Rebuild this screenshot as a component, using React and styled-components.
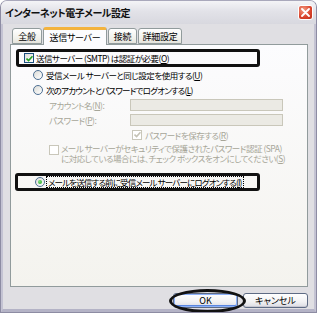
import React from 'react';
import styled, { createGlobalStyle } from 'styled-components';

const GlobalStyle = createGlobalStyle`
  * { box-sizing: border-box; }
  body {
    margin: 0;
    background: #ffffff;
    font-family: "Noto Sans CJK JP", "Noto Sans", sans-serif;
    font-feature-settings: "palt";
  }
`;

export default function App() {
  return (
    <>
      <GlobalStyle />
      <Window>
        <TitleBar>
          <Title>インターネット電子メール設定</Title>
          <CloseButton>
            <svg width="9" height="9" viewBox="0 0 9 9">
              <path d="M1 1 L8 8 M8 1 L1 8" stroke="#fff" strokeWidth="1.8" strokeLinecap="round" />
            </svg>
          </CloseButton>
        </TitleBar>
        <Body>
          <TabRow>
            <Tab w={30}>全般</Tab>
            <Tab w={64} active>送信サーバー</Tab>
            <Tab w={29}>接続</Tab>
            <Tab w={44}>詳細設定</Tab>
          </TabRow>
          <Panel>
            <MarkedRow>
              <CheckBox checked />
              <Label>送信サーバー (SMTP) は認証が必要(<u>O</u>)</Label>
            </MarkedRow>
            <RadioRow>
              <Radio />
              <Label>受信メール サーバーと同じ設定を使用する(<u>U</u>)</Label>
            </RadioRow>
            <RadioRow>
              <Radio />
              <Label tight>次のアカウントとパスワードでログオンする(<u>L</u>)</Label>
            </RadioRow>
            <FieldRow>
              <FieldLabel>アカウント名(<u>N</u>):</FieldLabel>
              <Input />
            </FieldRow>
            <FieldRow gapTop={2}>
              <FieldLabel>パスワード(<u>P</u>):</FieldLabel>
              <Input />
            </FieldRow>
            <SaveRow>
              <CheckBox checked disabled />
              <Label disabled>パスワードを保存する(<u>R</u>)</Label>
            </SaveRow>
            <SpaRow>
              <CheckBox disabled />
              <SpaText>
                <SpaLine>メール サーバーがセキュリティで保護されたパスワード認証 (SPA)</SpaLine>
                <SpaLine>に対応している場合には、チェック ボックスをオンにしてください(<u>S</u>)</SpaLine>
              </SpaText>
            </SpaRow>
            <MarkedRadioRow>
              <Radio checked />
              <FocusLabel>メールを送信する前に受信メール サーバーにログオンする(<u>I</u>)</FocusLabel>
            </MarkedRadioRow>
          </Panel>
          <ButtonRow>
            <Ring />
            <Button primary>OK</Button>
            <Button>キャンセル</Button>
          </ButtonRow>
        </Body>
      </Window>
    </>
  );
}

function CheckBox({ checked, disabled }) {
  return (
    <Box disabled={disabled}>
      {checked && (
        <svg width="7" height="7" viewBox="0 0 7 7">
          <path d="M0.5 3.5 L2.6 5.6 L6.5 1.2" fill="none" stroke={disabled ? '#c4c2b5' : '#21a121'} strokeWidth="1.6" />
        </svg>
      )}
    </Box>
  );
}

function Radio({ checked }) {
  return <RadioCircle>{checked && <Dot />}</RadioCircle>;
}

const Window = styled.div`
  position: relative;
  width: 317px;
  height: 313px;
  display: flex;
  flex-direction: column;
  background: #e0dfe3;
  border: 1px solid #8d8ca3;
  border-top-color: #a9a8bb;
  border-radius: 7px 7px 0 0;
  overflow: hidden;
`;

const TitleBar = styled.div`
  height: 23px;
  flex: none;
  display: flex;
  align-items: center;
  justify-content: space-between;
  padding: 0 3px 0 4px;
  background: linear-gradient(#f4f4f7, #e2e2e8 45%, #d8d8df);
`;

const Title = styled.div`
  font-size: 10px;
  font-weight: 700;
  color: #111;
  letter-spacing: -0.5px;
`;

const CloseButton = styled.div`
  width: 15px;
  height: 15px;
  border-radius: 3px;
  border: 1px solid #fff;
  background: radial-gradient(circle at 35% 30%, #f29b82, #d9412a 60%, #b8301c);
  display: flex;
  align-items: center;
  justify-content: center;
`;

const Body = styled.div`
  flex: 1;
  display: flex;
  flex-direction: column;
  padding: 2px 6px 0 7px;
  border-left: 2px solid #c4c3d3;
  border-right: 2px solid #c4c3d3;
  border-bottom: 3px solid #b4b3c6;
`;

const TabRow = styled.div`
  height: 18px;
  display: flex;
  align-items: flex-end;
  padding-left: 2px;
  position: relative;
  z-index: 1;
`;

const Tab = styled.div`
  width: ${p => p.w}px;
  height: ${p => (p.active ? 18 : 16)}px;
  margin-right: 1px;
  margin-bottom: ${p => (p.active ? -1 : 0)}px;
  display: flex;
  align-items: center;
  justify-content: center;
  font-size: 9px;
  letter-spacing: -0.3px;
  color: #000;
  border: 1px solid #919b9c;
  border-bottom: ${p => (p.active ? 'none' : '1px solid #919b9c')};
  border-top: ${p => (p.active ? '3px solid #f3b33d' : '1px solid #919b9c')};
  border-radius: 3px 3px 0 0;
  background: ${p => (p.active ? '#fcfcfe' : 'linear-gradient(#ffffff, #f0f0ea 70%, #e4e3dc)')};
`;

const Panel = styled.div`
  height: 243px;
  display: flex;
  flex-direction: column;
  align-items: flex-start;
  padding: 4px 0 0 5px;
  border: 1px solid #919b9c;
  background: linear-gradient(#fcfcfe, #f4f3ee);
  font-size: 8.5px;
  letter-spacing: -0.5px;
  color: #000;
`;

const Label = styled.span`
  white-space: nowrap;
  letter-spacing: ${p => (p.tight ? '-0.8px' : '-0.5px')};
  color: ${p => (p.disabled ? '#a7a698' : '#000')};
`;

const MarkedRow = styled.div`
  width: 244px;
  height: 18px;
  flex: none;
  display: flex;
  align-items: center;
  gap: 2px;
  padding-left: 5px;
  border: 3px solid #111;
  border-radius: 3px;
`;

const RadioRow = styled.div`
  height: 15px;
  flex: none;
  display: flex;
  align-items: center;
  gap: 3px;
  padding-left: 17px;
  & + & { height: 16px; }
`;

const FieldRow = styled.div`
  height: 13px;
  flex: none;
  margin-top: ${p => p.gapTop || 0}px;
  display: flex;
  align-items: center;
  padding-left: 33px;
  color: #a7a698;
`;

const FieldLabel = styled.span`
  width: 81px;
  white-space: nowrap;
`;

const Input = styled.div`
  width: 153px;
  height: 12px;
  border: 1px solid #c9c7ba;
  background: #ebeae4;
`;

const SaveRow = styled.div`
  height: 15px;
  flex: none;
  margin-top: 1px;
  display: flex;
  align-items: center;
  gap: 3px;
  padding-left: 116px;
`;

const SpaRow = styled.div`
  height: 19px;
  flex: none;
  margin-top: 3px;
  display: flex;
  align-items: flex-start;
  gap: 2px;
  padding-left: 33px;
`;

const SpaText = styled.div`
  display: flex;
  flex-direction: column;
  margin-top: -2px;
  color: #a7a698;
`;

const SpaLine = styled.div`
  height: 10px;
  line-height: 10px;
  white-space: nowrap;
`;

const MarkedRadioRow = styled.div`
  width: 245px;
  height: 18px;
  flex: none;
  margin-top: 9px;
  margin-left: -1px;
  display: flex;
  align-items: center;
  gap: 1px;
  padding-left: 17px;
  border: 3px solid #111;
  border-radius: 3px;
`;

const FocusLabel = styled.span`
  flex: none;
  line-height: 10px;
  white-space: nowrap;
  letter-spacing: -0.85px;
  border: 1px dotted #000;
  padding: 0 1px;
`;

const Box = styled.span`
  flex: none;
  width: 10px;
  height: 10px;
  display: flex;
  align-items: center;
  justify-content: center;
  border: 1px solid ${p => (p.disabled ? '#c9c7ba' : '#1c5180')};
  background: ${p => (p.disabled ? '#fff' : 'linear-gradient(135deg, #dcdcd7, #fff)')};
`;

const RadioCircle = styled.span`
  flex: none;
  width: 10px;
  height: 10px;
  border-radius: 50%;
  border: 1px solid #4d6f93;
  background: linear-gradient(135deg, #dcdcd7, #fff);
  display: flex;
  align-items: center;
  justify-content: center;
`;

const Dot = styled.span`
  width: 4px;
  height: 4px;
  border-radius: 50%;
  background: radial-gradient(circle at 35% 35%, #7be17b, #21a121);
`;

const ButtonRow = styled.div`
  position: relative;
  display: flex;
  justify-content: flex-end;
  gap: 5px;
  margin-top: 6px;
`;

const Button = styled.div`
  width: 65px;
  height: 15px;
  display: flex;
  align-items: center;
  justify-content: center;
  font-size: 9px;
  color: #000;
  border: 1px solid #5e6b84;
  border-radius: 3px;
  background: linear-gradient(#ffffff, #f1f1f3 60%, #dcdce3);
  box-shadow: ${p => (p.primary ? 'inset 0 0 0 1px #8cb0f8, inset 0 -1px 0 1px #5b87e0' : 'inset 0 -1px 0 #c8c8d2')};
`;

const Ring = styled.div`
  position: absolute;
  left: 159px;
  top: -4px;
  width: 77px;
  height: 24px;
  border: 3px solid #111;
  border-radius: 50%;
  pointer-events: none;
`;
